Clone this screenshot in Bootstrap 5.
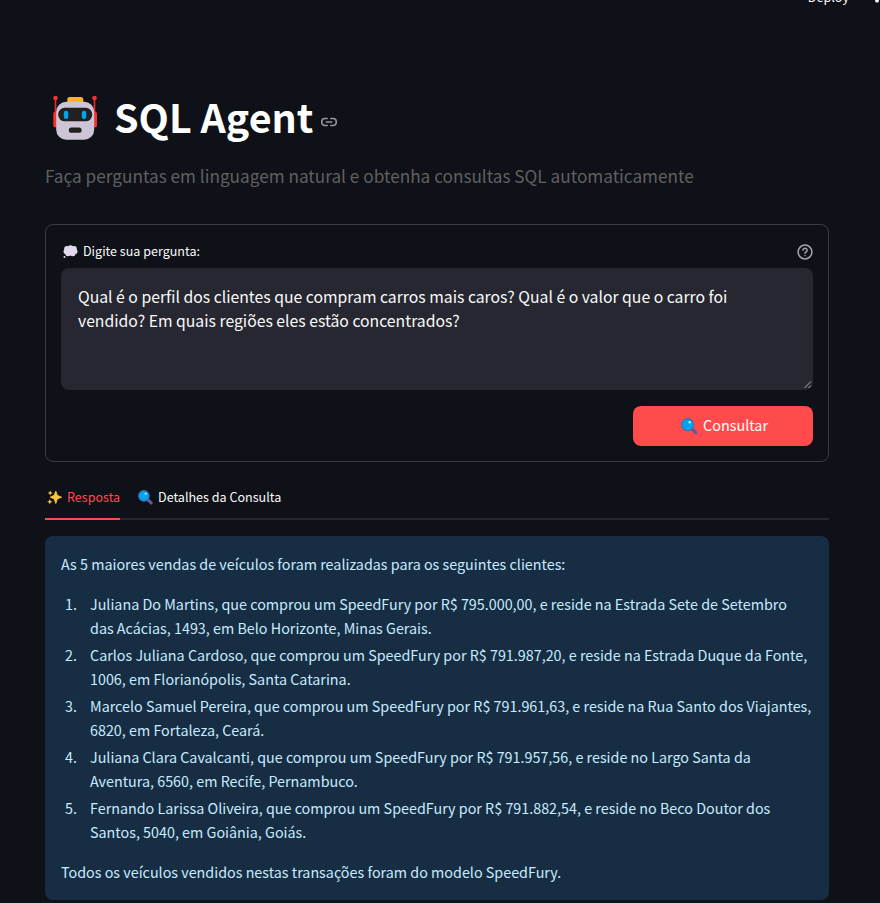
<!DOCTYPE html>
<html lang="pt-BR" data-bs-theme="dark">
<head>
<meta charset="utf-8">
<meta name="viewport" content="width=device-width, initial-scale=1">
<title>SQL Agent</title>
<link href="https://cdn.jsdelivr.net/npm/bootstrap@5.3.0/dist/css/bootstrap.min.css" rel="stylesheet">
<style>
  body { background: #0e1117; color: #fafafa; font-family: "Noto Sans CJK SC", "Noto Sans", sans-serif; font-size: 14.33px; line-height: 24px; height: 903px; overflow: hidden; }
  svg { display: block; flex: none; }
  .topbar { height: 85px; }
  .deploy { font-size: 12.6px; line-height: 20px; margin-top: -13px; margin-right: 25px; }
  .kebab { margin-top: -11px; }
  .page { width: 784px; margin-left: 45px; }
  .title-row { height: 66px; }
  .title-row h1 { font-size: 39.4px; font-weight: 700; line-height: 66px; margin: -4px 0 0 16px; white-space: nowrap; }
  .link-mark { margin: 8px 0 0 7px; }
  .subtitle { color: #606060; font-size: 17.2px; line-height: 29px; margin: 10px 0 34px; white-space: nowrap; }
  .ask { height: 238px; border: 1px solid #3a3c42; border-radius: 8px; padding: 15px; }
  .ask-label { font-size: 12.54px; line-height: 24px; height: 28px; }
  .ask-label label { margin-top: -1px; }
  .bubble { margin: 5px 5px 0 2px; }
  .help { margin-top: 4px; }
  .question { display: block; width: 752px; height: 122px; background: #262730; color: #fafafa; border: 0; border-radius: 8px; padding: 17px; font-size: 15.76px; line-height: 24px; white-space: pre; resize: none; overflow: hidden; }
  .question-wrap { position: relative; }
  .grip { position: absolute; right: 1px; bottom: 1px; }
  .btn-ask { width: 180px; height: 40px; margin-top: 16px; background: #ff4b4b; color: #fff; border: 0; border-radius: 8px; font-size: 14.4px; line-height: 24px; padding: 0 0 2px 3px; }
  .btn-ask:hover { background: #ff4b4b; color: #fff; }
  .btn-ask svg { margin: 2px 5px 0 0; }
  .tab-row { margin-top: 15px; height: 43px; border-bottom: 2px solid #262730; font-size: 12.56px; gap: 16px; }
  .tab-item { height: 43px; padding-bottom: 1px; border-bottom: 2px solid transparent; white-space: nowrap; }
  .tab-item.on { color: #ff4b4b; border-color: #ff4b4b; width: 75px; }
  .tab-item svg { margin: 0 5px 0 2px; }
  .answer { margin-top: 16px; height: 364px; background: #172d43; color: #c7ebff; border-radius: 8px; padding: 16px; white-space: nowrap; }
  .answer p { margin: 0; }
  .answer ol { margin: 16px 0; padding: 0; list-style: none; }
  .answer li { margin-bottom: 3px; }
  .answer li:last-child { margin-bottom: 0; }
  .num { width: 29px; padding-left: 4px; flex: none; }
</style>
</head>
<body>
<svg width="0" height="0" class="position-absolute" aria-hidden="true">
  <symbol id="lens" viewBox="0 0 16 16">
    <path d="M9.5 9.5 14 13.8" stroke="#6a5a9c" stroke-width="3.2" stroke-linecap="round"/>
    <circle cx="6.3" cy="6.3" r="5.6" fill="#00a6ed" stroke="#3f6fb5" stroke-width="1.2"/>
    <circle cx="8.2" cy="3.9" r="1.1" fill="#d5f2ff"/>
  </symbol>
</svg>
<header class="topbar d-flex justify-content-end align-items-start">
  <span class="deploy">Deploy</span>
  <svg class="kebab" width="6" height="14" viewBox="0 0 6 14" fill="#fafafa"><circle cx="3" cy="2" r="1.900"/><circle cx="3" cy="7" r="1.900"/><circle cx="3" cy="11.700" r="1.900"/></svg>
</header>
<main class="page">
  <div class="title-row d-flex align-items-center">
    <svg class="ms-2" width="45" height="46" viewBox="0 0 45 46">
      <path d="M2.500 4v18M41.500 4v18" stroke="#e02a30" stroke-width="1.700"/>
      <circle cx="2.500" cy="3" r="2.300" fill="#f8312f"/><circle cx="41.500" cy="3" r="2.300" fill="#f8312f"/>
      <rect x=".3" y="16.500" width="6" height="16" rx="2.500" fill="#f8312f"/><rect x="38" y="16.500" width="6" height="16" rx="2.500" fill="#f8312f"/>
      <rect x="14.300" y="2" width="16" height="8" rx="2.500" fill="#ffb02e"/>
      <rect x="3.200" y="6.800" width="38" height="38" rx="10" fill="#cdc4d6"/>
      <rect x="5.200" y="12.800" width="34" height="13.500" rx="6.500" fill="#212121"/>
      <rect x="10.800" y="15.800" width="4.500" height="8.200" rx="2.200" fill="#00a6ed"/><rect x="28.800" y="15.800" width="4.500" height="8.200" rx="2.200" fill="#00a6ed"/>
      <rect x="15.800" y="32.500" width="12.800" height="5.300" rx="2.600" fill="#212121"/>
    </svg>
    <h1>SQL Agent</h1>
    <svg class="link-mark" width="18" height="18" viewBox="0 0 18 18" fill="none" stroke="#96989d" stroke-width="1.600" stroke-linecap="round"><path d="M7.200 5.500H4.800a3 3 0 0 0-3 3v1a3 3 0 0 0 3 3h2.400M10.800 5.500h2.400a3 3 0 0 1 3 3v1a3 3 0 0 1-3 3h-2.400M6.300 9h5.400"/></svg>
  </div>
  <p class="subtitle">Faça perguntas em linguagem natural e obtenha consultas SQL automaticamente</p>
  <form class="ask" onsubmit="return false">
    <div class="ask-label d-flex justify-content-between">
      <div class="d-flex">
        <svg class="bubble" width="15" height="14" viewBox="0 0 15 14" fill="#e1d8ec"><circle cx="4" cy="4" r="2.900"/><circle cx="7.500" cy="3.200" r="2.900"/><circle cx="11" cy="4" r="2.900"/><circle cx="3" cy="6.500" r="2.500"/><circle cx="12" cy="6.500" r="2.500"/><circle cx="5" cy="8.500" r="2.800"/><circle cx="9.800" cy="8.500" r="2.800"/><circle cx="7.500" cy="6.500" r="4"/><circle cx="1.500" cy="12" r="1"/></svg>
        <label for="q">Digite sua pergunta:</label>
      </div>
      <svg class="help" width="16" height="16" viewBox="0 0 16 16" fill="none" stroke="#a3a4a8" stroke-width="1.500" stroke-linecap="round" stroke-linejoin="round"><circle cx="8" cy="8" r="6.900"/><path d="M6 6.300a2.050 2 0 1 1 3 1.700c-.7.400-1 .7-1 1.300"/><path d="M8 11.400v.1"/></svg>
    </div>
    <div class="question-wrap">
      <textarea id="q" class="question" spellcheck="false">Qual é o perfil dos clientes que compram carros mais caros? Qual é o valor que o carro foi
vendido? Em quais regiões eles estão concentrados?</textarea>
      <svg class="grip" width="8" height="8" viewBox="0 0 8 8" stroke="#c0c0c5" stroke-width=".9"><path d="M.5 7 7 .5M4.500 7 7 4.500"/></svg>
    </div>
    <div class="d-flex justify-content-end">
      <button class="btn btn-ask d-flex align-items-center justify-content-center" type="button"><svg width="17" height="17"><use href="#lens"/></svg><span>Consultar</span></button>
    </div>
  </form>
  <nav class="tab-row d-flex">
    <div class="tab-item on d-flex align-items-center">
      <svg width="15" height="15" viewBox="0 0 15 15" fill="#fcc53c"><path d="M8.800 1 10.300 5.300 14.600 7.200 10.300 9 8.800 13.500 7.200 9 3.200 7.200 7.200 5.300Z" stroke="#fcc53c" stroke-width=".8" stroke-linejoin="round"/><path d="M3.200.5 4 2.300 5.700 3 4 3.800 3.200 5.500 2.400 3.800.7 3 2.400 2.300ZM2.800 9 3.600 11 5.500 11.700 3.600 12.500 2.800 14.400 2 12.500.2 11.700 2 11Z"/></svg>
      <span>Resposta</span>
    </div>
    <div class="tab-item d-flex align-items-center">
      <svg width="15" height="15"><use href="#lens"/></svg>
      <span>Detalhes da Consulta</span>
    </div>
  </nav>
  <section class="answer">
    <p>As 5 maiores vendas de veículos foram realizadas para os seguintes clientes:</p>
    <ol>
      <li class="d-flex"><span class="num">1.</span><span>Juliana Do Martins, que comprou um SpeedFury por R$ 795.000,00, e reside na Estrada Sete de Setembro<br>das Acácias, 1493, em Belo Horizonte, Minas Gerais.</span></li>
      <li class="d-flex"><span class="num">2.</span><span>Carlos Juliana Cardoso, que comprou um SpeedFury por R$ 791.987,20, e reside na Estrada Duque da Fonte,<br>1006, em Florianópolis, Santa Catarina.</span></li>
      <li class="d-flex"><span class="num">3.</span><span>Marcelo Samuel Pereira, que comprou um SpeedFury por R$ 791.961,63, e reside na Rua Santo dos Viajantes,<br>6820, em Fortaleza, Ceará.</span></li>
      <li class="d-flex"><span class="num">4.</span><span>Juliana Clara Cavalcanti, que comprou um SpeedFury por R$ 791.957,56, e reside no Largo Santa da<br>Aventura, 6560, em Recife, Pernambuco.</span></li>
      <li class="d-flex"><span class="num">5.</span><span>Fernando Larissa Oliveira, que comprou um SpeedFury por R$ 791.882,54, e reside no Beco Doutor dos<br>Santos, 5040, em Goiânia, Goiás.</span></li>
    </ol>
    <p>Todos os veículos vendidos nestas transações foram do modelo SpeedFury.</p>
  </section>
</main>
<script src="https://cdn.jsdelivr.net/npm/bootstrap@5.3.0/dist/js/bootstrap.bundle.min.js"></script>
</body>
</html>
